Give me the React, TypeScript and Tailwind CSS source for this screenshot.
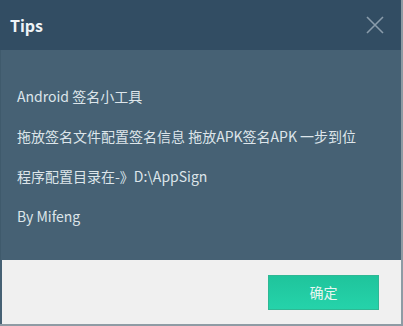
import React from "react";

const lines = [
  "Android 签名小工具",
  "拖放签名文件配置签名信息 拖放APK签名APK 一步到位",
  "程序配置目录在-》D:\\AppSign",
  "By Mifeng",
];

export default function App() {
  return (
    <div
      className="flex h-[326px] w-[403px] flex-col overflow-hidden border-r-2 border-b-2 border-[#8e9ba4] bg-[#466174]"
      style={{ fontFamily: '"Noto Sans CJK SC", "Noto Sans", sans-serif' }}
    >
      {/* Header */}
      <div className="flex h-[50px] shrink-0 items-center justify-between bg-[#324d63] pl-[10px] pr-[17px]">
        <span className="text-[16px] font-bold text-[#eef3f7]">Tips</span>
        <svg width="18" height="18" viewBox="0 0 18 18" fill="none">
          <path d="M1 1L17 17M17 1L1 17" stroke="#8a9cab" strokeWidth="1.6" />
        </svg>
      </div>

      {/* Body */}
      <div className="flex flex-1 flex-col gap-[20px] border-l border-[#3f5a6c] pl-[16px] pt-[36px]">
        {lines.map((line) => (
          <p key={line} className="text-[14px] leading-[20px] text-[#dde5ea]">
            {line}
          </p>
        ))}
      </div>

      {/* Footer */}
      <div className="ml-[2px] flex h-[64px] shrink-0 items-center justify-end bg-[#f0f0f0] pr-[22px]">
        <button className="h-[35px] w-[111px] border border-[#2fb894] bg-gradient-to-b from-[#1fc49c] to-[#25d3aa] text-[14px] text-[#e9f6f2]">
          确定
        </button>
      </div>
    </div>
  );
}
